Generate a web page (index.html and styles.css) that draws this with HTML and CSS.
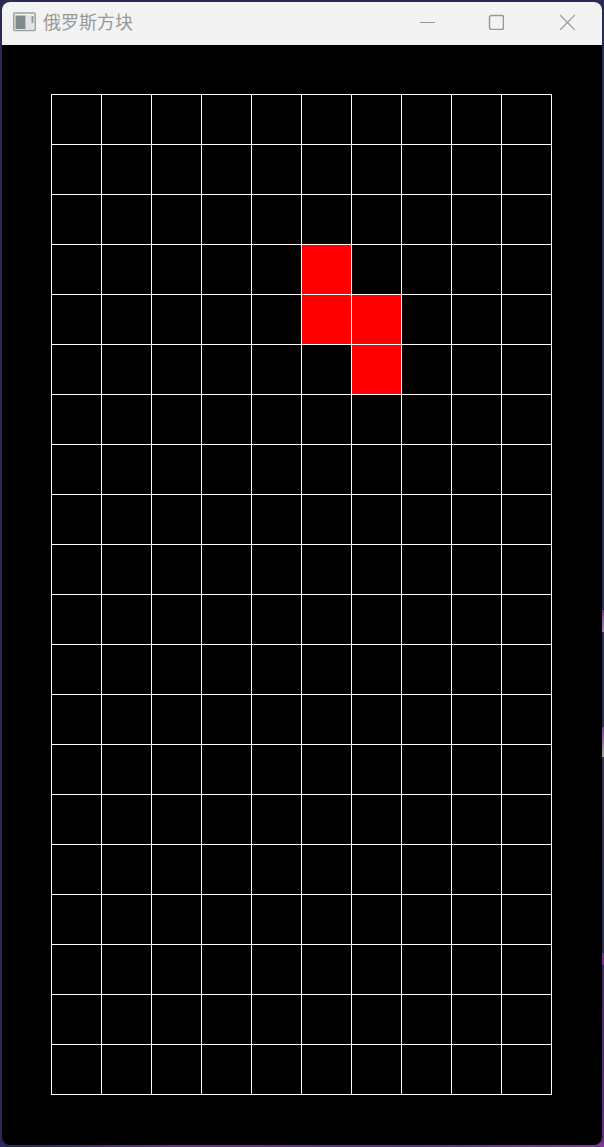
FILE: index.html
```html
<!DOCTYPE html>
<html lang="zh-CN">
<head>
    <meta charset="UTF-8">
    <title>俄罗斯方块</title>
    <link rel="stylesheet" href="styles.css">
</head>
<body>
    <div class="window">
        <header class="titlebar">
            <svg class="app-icon" width="24" height="20" viewBox="0 0 24 20">
                <rect x="0.75" y="1" width="21.5" height="17.5" rx="1" fill="#f2f2f2" stroke="#97a3a3" stroke-width="1.5"/>
                <rect x="2.5" y="3.5" width="10" height="13.5" fill="#7f8c8c"/>
                <rect x="13" y="3.5" width="7.5" height="13.5" fill="#e2e2e2"/>
                <rect x="18.5" y="4" width="2" height="7" fill="#8f9c9c"/>
            </svg>
            <span class="title">俄罗斯方块</span>
            <div class="controls">
                <svg class="btn-min" width="16" height="16" viewBox="0 0 16 16">
                    <path d="M0 8.5H15" stroke="#999" stroke-width="1"/>
                </svg>
                <svg class="btn-max" width="16" height="16" viewBox="0 0 16 16">
                    <rect x="1.5" y="1.5" width="14" height="14" rx="2" fill="none" stroke="#999" stroke-width="1.5"/>
                </svg>
                <svg class="btn-close" width="16" height="16" viewBox="0 0 16 16">
                    <path d="M1 1L16 16M16 1L1 16" stroke="#999" stroke-width="1.2"/>
                </svg>
            </div>
        </header>
        <main class="client">
            <div class="board">
                <div class="block col6 row4"></div>
                <div class="block col6 row5"></div>
                <div class="block col7 row5"></div>
                <div class="block col7 row6"></div>
            </div>
        </main>
    </div>
</body>
</html>
```

FILE: styles.css
```css
* {
    box-sizing: border-box;
    margin: 0;
    padding: 0;
}

/* desktop wallpaper showing round the window */
body {
    width: 604px;
    height: 1147px;
    padding: 2px;
    overflow: hidden;
    background:
        linear-gradient(90deg, #2b2a55 0, #2f2a5c 8%, #6a2f8c 30%, #5a2f85 70%, #7b3a9a 100%) bottom / 100% 4px no-repeat,
        linear-gradient(180deg, #2b2a55 0, #2b2a55 610px, #7b3a9a 610px, #9a8aa5 632px, #2b2a55 632px, #2b2a55 727px, #7b3a9a 727px, #a5a5a5 757px, #33324f 757px, #2b2a55 953px, #7b2f95 953px, #7b2f95 965px, #3a2a66 965px, #6a3090 1147px) right / 50% 100% no-repeat,
        #2b2a55;
}

.window {
    width: 600px;
    height: 1143px;
    border-radius: 8px;
    overflow: hidden;
    background-color: #000000;
}

.titlebar {
    display: flex;
    align-items: center;
    height: 43px;
    padding: 0 0 3px 11px;
    background-color: #f3f3f3;
}

.app-icon {
    flex: none;
}

.title {
    margin: 0 0 3px 6px;
    font-family: "Noto Sans CJK SC", "Liberation Sans", sans-serif;
    font-size: 18px;
    color: #999999;
}

.controls {
    display: flex;
    align-items: center;
    margin-left: auto;
    padding-right: 27px;
}

.btn-max {
    margin-left: 52px;
}

.btn-close {
    margin-left: 55px;
}

.client {
    padding: 49px 0 0 49px;
}

/* 10 x 20 cells, the lines are the gaps */
.board {
    display: grid;
    grid-template-columns: repeat(10, 49px);
    grid-template-rows: repeat(20, 49px);
    gap: 1px;
    width: 501px;
    height: 1001px;
    padding: 1px;
    background-color: #000000;
    background-image:
        linear-gradient(#ffffff 1px, transparent 1px),
        linear-gradient(90deg, #ffffff 1px, transparent 1px),
        linear-gradient(#ffffff, #ffffff),
        linear-gradient(#ffffff, #ffffff);
    background-size: 50px 50px, 50px 50px, 1px 100%, 100% 1px;
    background-position: 0 0, 0 0, right top, left bottom;
    background-repeat: repeat, repeat, no-repeat, no-repeat;
}

.block {
    background-color: #ff0000;
}

.col6 { grid-column: 6; }
.col7 { grid-column: 7; }
.row4 { grid-row: 4; }
.row5 { grid-row: 5; }
.row6 { grid-row: 6; }
```
